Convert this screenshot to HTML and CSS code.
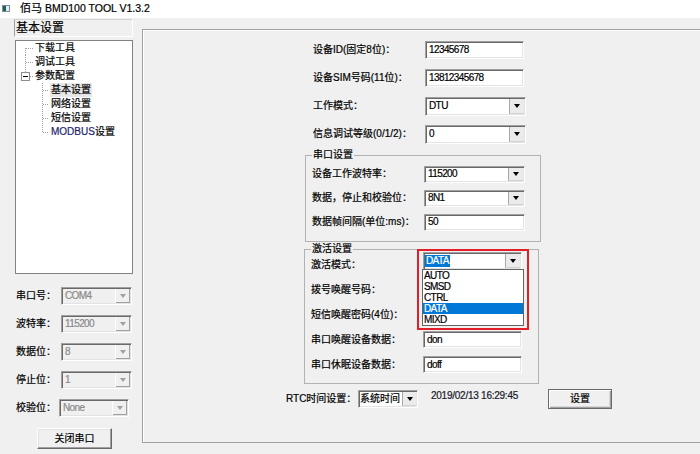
FILE: index.html
```html
<!DOCTYPE html>
<html lang="zh-CN">
<head>
<meta charset="utf-8">
<title>佰马 BMD100 TOOL V1.3.2</title>
<link rel="stylesheet" href="styles.css">
</head>
<body>
<div class="titlebar">
  <svg class="app-icon" width="8" height="7" viewBox="0 0 8 7">
    <rect x="0.5" y="0.5" width="7" height="6" fill="#e4ecf1" stroke="#7d8d99"/>
    <rect x="1" y="1" width="3" height="5" fill="#1f5f58"/>
  </svg>
  <span class="title"><span class="title-cjk">佰马</span> BMD100 TOOL V1.3.2</span>
</div>
<div class="client">
  <aside class="sidebar">
    <div class="side-head">基本设置</div>
    <div class="tree">
      <div class="node">
        <svg class="conn" width="18" height="14"><path class="ln" d="M9.5 7V14M10 7.5H18"/></svg>
        <span class="node-text">下载工具</span>
      </div>
      <div class="node">
        <svg class="conn" width="18" height="14"><path class="ln" d="M9.5 0V14M10 7.5H18"/></svg>
        <span class="node-text">调试工具</span>
      </div>
      <div class="node">
        <svg class="conn" width="18" height="14"><path class="ln" d="M9.5 0V3M14 7.5H18"/><rect class="box" x="5.5" y="3.5" width="8" height="8"/><path class="minus" d="M7 7.5H12"/></svg>
        <span class="node-text">参数配置</span>
      </div>
      <div class="node is-selected">
        <svg class="conn" width="34" height="14"><path class="ln" d="M26.5 0V14M27 7.5H33"/></svg>
        <span class="node-text">基本设置</span>
      </div>
      <div class="node">
        <svg class="conn" width="34" height="14"><path class="ln" d="M26.5 0V14M27 7.5H33"/></svg>
        <span class="node-text">网络设置</span>
      </div>
      <div class="node">
        <svg class="conn" width="34" height="14"><path class="ln" d="M26.5 0V14M27 7.5H33"/></svg>
        <span class="node-text">短信设置</span>
      </div>
      <div class="node">
        <svg class="conn" width="34" height="14"><path class="ln" d="M26.5 0V7M27 7.5H33"/></svg>
        <span class="node-text"><span class="navy">MODBUS</span>设置</span>
      </div>
    </div>

    <div class="port-form">
      <div class="port-row">
        <span class="port-label">串口号：</span>
        <div class="select is-disabled"><span class="val">COM4</span><span class="arrow"></span></div>
      </div>
      <div class="port-row">
        <span class="port-label">波特率：</span>
        <div class="select is-disabled"><span class="val">115200</span><span class="arrow"></span></div>
      </div>
      <div class="port-row">
        <span class="port-label">数据位：</span>
        <div class="select is-disabled"><span class="val">8</span><span class="arrow"></span></div>
      </div>
      <div class="port-row">
        <span class="port-label">停止位：</span>
        <div class="select is-disabled"><span class="val">1</span><span class="arrow"></span></div>
      </div>
      <div class="port-row is-narrow">
        <span class="port-label">校验位：</span>
        <div class="select is-disabled"><span class="val">None</span><span class="arrow"></span></div>
      </div>
    </div>
    <button class="btn close-btn">关闭串口</button>
  </aside>

  <main class="panel">
    <div class="top-rows">
      <div class="row">
        <span class="label">设备ID(固定8位)：</span>
        <div class="field"><span class="val">12345678</span></div>
      </div>
      <div class="row">
        <span class="label">设备SIM号码(11位)：</span>
        <div class="field"><span class="val">13812345678</span></div>
      </div>
      <div class="row">
        <span class="label">工作模式：</span>
        <div class="select"><span class="val">DTU</span><span class="arrow"></span></div>
      </div>
      <div class="row">
        <span class="label">信息调试等级(0/1/2)：</span>
        <div class="select"><span class="val">0</span><span class="arrow"></span></div>
      </div>
    </div>

    <fieldset class="group group-serial">
      <legend>串口设置</legend>
      <div class="row">
        <span class="label">设备工作波特率：</span>
        <div class="select"><span class="val">115200</span><span class="arrow"></span></div>
      </div>
      <div class="row">
        <span class="label">数据，停止和校验位：</span>
        <div class="select"><span class="val">8N1</span><span class="arrow"></span></div>
      </div>
      <div class="row">
        <span class="label">数据帧间隔(单位:ms)：</span>
        <div class="field"><span class="val">50</span></div>
      </div>
    </fieldset>

    <fieldset class="group group-wake">
      <legend>激活设置</legend>
      <div class="row">
        <span class="label">激活模式：</span>
        <div class="select is-open">
          <span class="val"><span class="sel-text">DATA</span></span><span class="arrow"></span>
          <div class="highlight-frame"></div>
          <ul class="dropdown">
            <li>AUTO</li>
            <li>SMSD</li>
            <li>CTRL</li>
            <li class="is-active">DATA</li>
            <li>MIXD</li>
          </ul>
        </div>
      </div>
      <div class="row">
        <span class="label">拨号唤醒号码：</span>
        <div class="field"><span class="val"></span></div>
      </div>
      <div class="row">
        <span class="label">短信唤醒密码(4位)：</span>
        <div class="field"><span class="val"></span></div>
      </div>
      <div class="row">
        <span class="label">串口唤醒设备数据：</span>
        <div class="field"><span class="val">don</span></div>
      </div>
      <div class="row">
        <span class="label">串口休眠设备数据：</span>
        <div class="field"><span class="val">doff</span></div>
      </div>
    </fieldset>

    <div class="rtc-row">
      <span class="rtc-label">RTC时间设置：</span>
      <div class="select rtc-select"><span class="val cjk">系统时间</span><span class="arrow"></span></div>
      <span class="timestamp">2019/02/13 16:29:45</span>
      <button class="btn set-btn">设置</button>
    </div>
  </main>
</div>
</body>
</html>
```

FILE: styles.css
```css
* { box-sizing: border-box; }

html, body { margin: 0; padding: 0; }

body {
  width: 700px;
  height: 454px;
  overflow: hidden;
  background: #f0f0f0;
  color: #000;
  font-family: "Liberation Sans", "Noto Sans CJK SC", sans-serif;
  font-size: 10px;
  line-height: 14px;
  -webkit-text-stroke: 0.2px currentColor;
}

/* ---------- title bar ---------- */
.titlebar {
  height: 18px;
  background: #fff;
  display: flex;
  align-items: center;
  padding: 0 0 2px 2px;
}
.app-icon { display: block; flex: none; }
.title { margin-left: 10px; font-size: 10.5px; line-height: 14px; white-space: nowrap; }
.title-cjk { font-size: 11px; }

/* ---------- client ---------- */
.client {
  display: flex;
  align-items: flex-start;
  height: 436px;
}

/* ---------- sidebar ---------- */
.sidebar {
  flex: none;
  width: 142px;
  padding: 1px 0 0 14px;
  display: flex;
  flex-direction: column;
  align-items: flex-start;
}
.side-head {
  width: 119px;
  height: 18px;
  font-size: 12px;
  line-height: 16px;
  padding-left: 1px;
  border: 1px solid;
  border-color: #d4d4d4 #fff #fff #a0a0a0;
  white-space: nowrap;
}
.tree {
  margin: 3px 0 0 1px;
  width: 118px;
  height: 234px;
  background: #fff;
  border: 1px solid #828282;
}
.node {
  display: flex;
  align-items: center;
  height: 14px;
}
.conn { display: block; flex: none; }
.conn .ln { fill: none; stroke: #a0a0a0; stroke-width: 1; stroke-dasharray: 1 1; shape-rendering: crispEdges; }
.conn .box { fill: #fff; stroke: #8e8f8f; shape-rendering: crispEdges; }
.conn .minus { stroke: #000; shape-rendering: crispEdges; }
.node-text { padding: 0 1px; line-height: 14px; white-space: nowrap; }
.node.is-selected .node-text { background: #e7e7e7; }
.navy { color: #1c2470; }

.port-form { margin-top: 8px; }
.port-row {
  display: flex;
  align-items: center;
  height: 28px;
}
.port-label { flex: none; width: 47px; padding-left: 2px; white-space: nowrap; }
.port-row .select { width: 71px; height: 18px; }
.port-row.is-narrow .port-label { width: 45px; }
.port-row.is-narrow .select { width: 70px; }

/* ---------- buttons ---------- */
.btn {
  margin: 0;
  padding: 0;
  font: inherit;
  font-size: 10px;
  color: #000;
  background: #f0f0f0;
  border: 1px solid;
  border-color: #fff #696969 #696969 #fff;
  box-shadow: inset -1px -1px 0 #a0a0a0, inset 1px 1px 0 #e3e3e3;
}
.close-btn { margin: 6px 0 0 23px; width: 75px; height: 21px; }
.set-btn {
  width: 64px;
  height: 20px;
  border-color: #6a6a6a;
  box-shadow: inset 1px 1px 0 #fff, inset -1px -1px 0 #a0a0a0, inset -2px -2px 0 #d8d8d8;
}

/* ---------- inputs & selects ---------- */
.field, .select {
  flex: none;
  display: flex;
  align-items: center;
  padding: 1px;
  background: #fff;
  border: 1px solid;
  border-color: #a0a0a0 #fff #fff #a0a0a0;
  box-shadow: inset 1px 1px 0 #696969, inset -1px -1px 0 #e3e3e3;
}
.val {
  flex: 1;
  min-width: 0;
  overflow: hidden;
  white-space: nowrap;
  padding-left: 2px;
  font-size: 10px;
  letter-spacing: -0.6px;
  line-height: 12px;
}
.val.cjk { letter-spacing: 0; padding-left: 0; }
.arrow {
  flex: none;
  align-self: stretch;
  width: 15px;
  background: #ebebeb;
  border-left: 1px solid #a8a8a8;
  border-bottom: 1px solid #d2d2d2;
  display: flex;
  align-items: center;
  justify-content: center;
}
.arrow::after {
  content: "";
  display: block;
  width: 0;
  height: 0;
  border-left: 3px solid transparent;
  border-right: 3px solid transparent;
  border-top: 4px solid #000;
}
.select.is-disabled { background: #f0f0f0; }
.select.is-disabled .val { color: #8a8a8a; }
.select.is-disabled .arrow { background: #f0f0f0; border-left-color: #fff; box-shadow: inset -1px -1px 0 #a0a0a0; border-bottom: 0; }
.select.is-disabled .arrow::after { border-top-color: #a0a0a0; }

/* ---------- main panel ---------- */
.panel {
  flex: none;
  width: 570px;
  height: 414px;
  margin-top: 11px;
  border: 1px solid #a0a0a0;
  box-shadow: inset 1px 1px 0 #fff;
  padding: 6px 0 0 143px;
}
.row { display: flex; align-items: center; }
.label { flex: none; width: 112px; white-space: nowrap; }

.top-rows { margin-left: 27px; }
.top-rows .row { height: 28px; }
.top-rows .field { width: 99px; height: 18px; }
.top-rows .select { width: 101px; height: 19px; }

.group {
  margin: 0;
  min-width: 0;
  border: 1px solid #b2b2b2;
}
.group legend {
  padding: 0 1px;
  font-size: 10px;
  line-height: 6px;
  height: 6px;
  white-space: nowrap;
}
.group-serial {
  margin: 4px 0 0 19px;
  width: 236px;
  padding: 4px 6px 7px 6px;
}
.group-serial .row { height: 24px; }
.group-serial .select, .group-serial .field { width: 101px; height: 17px; }

.group-wake {
  margin: 4px 0 0 18px;
  width: 235px;
  padding: 0 6px 6px 6px;
}
.group-wake .row { height: 25px; }
.group-wake .select, .group-wake .field { width: 99px; height: 17px; }
.group-wake .select.is-open { align-self: flex-start; height: 18px; position: relative; }

.sel-text {
  display: inline-block;
  padding: 0 1px;
  background: #0078d7;
  color: #fff;
  line-height: 12px;
}
.val:has(.sel-text) { padding-left: 0; }

.dropdown {
  position: absolute;
  left: -2px;
  top: 16px;
  width: 102px;
  height: 57px;
  margin: 0;
  padding: 0;
  list-style: none;
  background: #fff;
  border: 1px solid #646464;
  z-index: 2;
}
.dropdown li {
  height: 11px;
  line-height: 11px;
  padding-left: 1px;
  font-size: 10px;
  letter-spacing: -0.6px;
}
.dropdown li.is-active { background: #0078d7; color: #fff; }
.highlight-frame {
  position: absolute;
  left: -7px;
  top: -4px;
  width: 112px;
  height: 81px;
  border: 2px solid #e41e26;
  z-index: 3;
  pointer-events: none;
}

/* ---------- RTC row ---------- */
.rtc-row {
  display: flex;
  align-items: flex-start;
  margin-top: 5px;
}
.rtc-label { flex: none; margin-top: 3px; width: 72px; white-space: nowrap; }
.rtc-select { margin-top: 1px; width: 60px; height: 18px; }
.rtc-select .arrow { width: 14px; }
.timestamp {
  flex: none;
  margin: 1px 0 0 13px;
  width: 117px;
  line-height: 12px;
  font-size: 10px;
  letter-spacing: -0.25px;
  color: #1a1a2a;
  white-space: nowrap;
}
```
